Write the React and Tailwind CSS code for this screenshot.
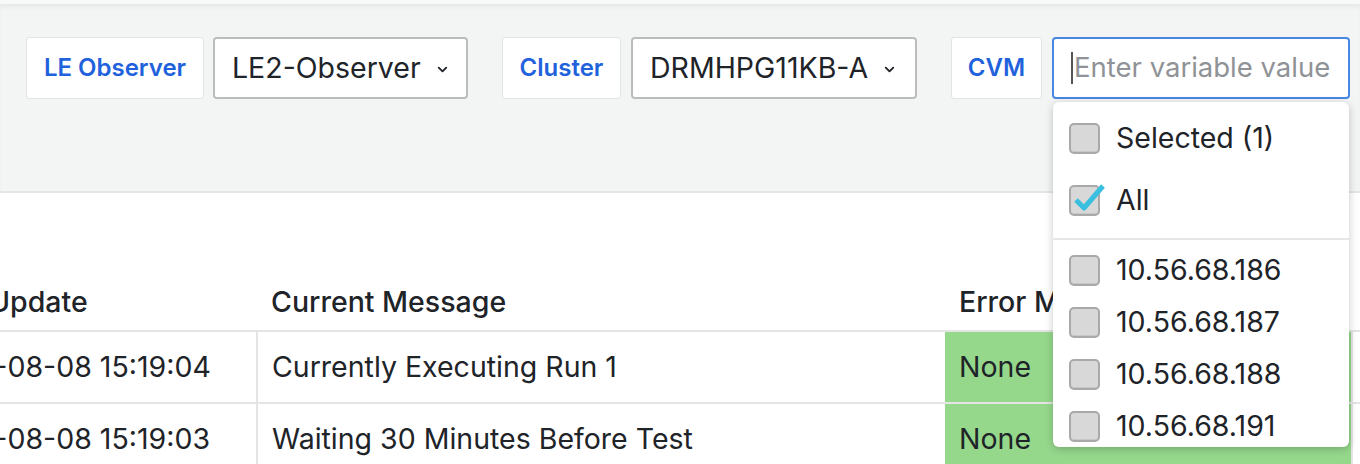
import { ChevronDown } from "lucide-react";

const ips = ["10.56.68.186", "10.56.68.187", "10.56.68.188", "10.56.68.191", "10.56.68.192"];

function Label({ children, width }) {
  return (
    <div className={`h-[62px] ${width} flex items-center justify-center bg-white border border-[#e2e4e4] rounded-[3px] text-[24px] font-semibold text-[#1f62dc]`}>
      {children}
    </div>
  );
}

function Picker({ value, width }) {
  return (
    <div
      className={`h-[62px] ${width} flex items-center gap-[14px] pl-[17px] bg-white border-2 border-[#bcbcbc] rounded-[4px] text-[28.5px] text-[#202328]`}
    >
      <span>{value}</span>
      <ChevronDown size={15} strokeWidth={3} className="text-[#202328] mt-[2px]" />
    </div>
  );
}

function Box({ checked }) {
  return (
    <div className="relative w-[31px] h-[31px] shrink-0 rounded-[5px] bg-[#d8d8d8] border-2 border-[#a9a9a9] shadow-[inset_0_-1px_0_rgba(0,0,0,0.08)]">
      {checked && (
        <svg className="absolute left-[0px] top-[-8px]" width="36" height="36" viewBox="0 0 36 36">
          <path d="M5 21 L13 29 L32 7" fill="none" stroke="#39bfe0" strokeWidth="5" strokeLinejoin="round" />
        </svg>
      )}
    </div>
  );
}

function Option({ label, checked, tall }) {
  return (
    <div className={`${tall ? "h-[62px]" : "h-[52px]"} flex items-center gap-[16px] pl-[16px] text-[28.5px] text-[#202328]`}>
      <Box checked={checked} />
      <span>{label}</span>
    </div>
  );
}

export default function App() {
  return (
    <div className="h-[464px] overflow-hidden bg-white font-['Inter','Liberation_Sans',sans-serif]">
      <div className="h-[4px] bg-[#f8f8f8]" />

      {/* variable bar */}
      <div className="h-[189px] bg-[#f3f4f4] border-b-2 border-[#e4e5e5] shadow-[inset_0_5px_6px_-3px_rgba(0,0,0,0.07)] pt-[33px] pl-[26px] flex items-start">
        <div className="flex gap-[9px]">
          <Label width="w-[178px]">LE Observer</Label>
          <Picker value="LE2-Observer" width="w-[255px]" />
        </div>
        <div className="flex gap-[10px] ml-[34px]">
          <Label width="w-[119px]">Cluster</Label>
          <Picker value="DRMHPG11KB-A" width="w-[286px]" />
        </div>
        <div className="flex gap-[10px] ml-[34px]">
          <Label width="w-[91px]">CVM</Label>
          <div className="relative">
            <div className="w-[298px] h-[62px] flex items-center pl-[17px] bg-white border-2 border-[#4a86e4] rounded-[4px] text-[27.5px] text-[#8f9296]">
              <span className="w-[2px] h-[32px] bg-[#555] mr-[1px]" />
              <span>Enter variable value</span>
            </div>
            {/* open menu */}
            <div className="absolute left-[1px] top-[65px] w-[296px] h-[345px] overflow-hidden bg-white rounded-[6px] shadow-[0_2px_8px_rgba(0,0,0,0.22)] z-10">
              <div className="pt-[5px] pb-[7px]">
                <Option label="Selected (1)" tall />
                <Option label="All" checked tall />
              </div>
              <div className="h-[2px] bg-[#e6e6e6]" />
              <div className="pt-[4px]">
                {ips.map((ip) => (
                  <Option key={ip} label={ip} />
                ))}
              </div>
            </div>
          </div>
        </div>
      </div>

      {/* results table */}
      <div className="pt-[81px] overflow-hidden">
        <table className="ml-[-90px] w-[1642px] table-fixed border-collapse text-[28.5px] text-[#202328] whitespace-nowrap">
          <thead>
            <tr className="h-[57px] border-b-2 border-[#e4e4e4] text-left">
              <th className="w-[347px] px-[14px] font-medium">Last Update</th>
              <th className="w-[688px] px-[14px] font-medium">Current Message</th>
              <th className="w-[407px] px-[14px] font-medium">Error Message</th>
              <th className="w-[200px] px-[14px] font-medium">Status</th>
            </tr>
          </thead>
          <tbody>
            <tr className="h-[72px] border-b-2 border-[#e4e4e4]">
              <td className="px-[14px] border-r-2 border-[#e4e4e4]">2023-08-08 15:19:04</td>
              <td className="px-[14px]">Currently Executing Run 1</td>
              <td className="px-[14px] bg-[#95d88c]">None</td>
              <td className="px-[14px] border-l-2 border-[#e4e4e4]"></td>
            </tr>
            <tr className="h-[72px] border-b-2 border-[#e4e4e4]">
              <td className="px-[14px] border-r-2 border-[#e4e4e4]">2023-08-08 15:19:03</td>
              <td className="px-[14px]">Waiting 30 Minutes Before Test</td>
              <td className="px-[14px] bg-[#95d88c]">None</td>
              <td className="px-[14px] border-l-2 border-[#e4e4e4]"></td>
            </tr>
          </tbody>
        </table>
      </div>
    </div>
  );
}
